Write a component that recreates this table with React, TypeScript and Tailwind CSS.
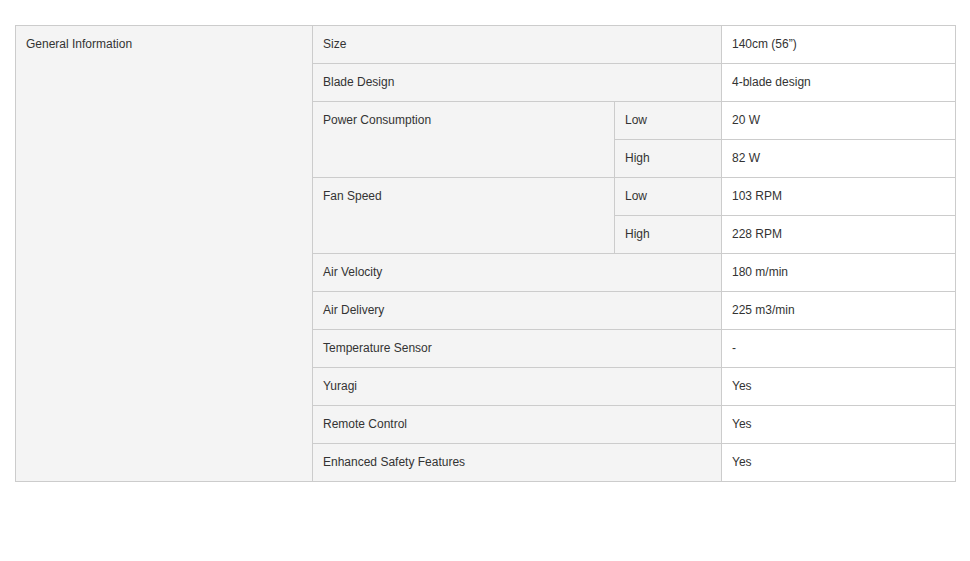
import React from "react";

const td = "border border-[#cccccc] align-top px-[10px] pt-[10px] pb-0 leading-[17px]";
const gray = "bg-[#f4f4f4]";

export default function App() {
  return (
    <div className="w-[970px] h-[561px] bg-white pt-[25px] pl-[15px] text-[12px] text-[#333333]" style={{ fontFamily: '"Liberation Sans", Arial, sans-serif' }}>
      <table className="border-collapse table-fixed w-[940px]">
        <colgroup>
          <col className="w-[297px]" />
          <col className="w-[302px]" />
          <col className="w-[107px]" />
          <col className="w-[234px]" />
        </colgroup>
        <tbody>
          <tr className="h-[38px]">
            <td rowSpan={12} className={`${td} ${gray}`}>General Information</td>
            <td colSpan={2} className={`${td} ${gray}`}>Size</td>
            <td className={td}>140cm (56”)</td>
          </tr>
          <tr className="h-[38px]">
            <td colSpan={2} className={`${td} ${gray}`}>Blade Design</td>
            <td className={td}>4-blade design</td>
          </tr>
          <tr className="h-[38px]">
            <td rowSpan={2} className={`${td} ${gray}`}>Power Consumption</td>
            <td className={`${td} ${gray}`}>Low</td>
            <td className={td}>20 W</td>
          </tr>
          <tr className="h-[38px]">
            <td className={`${td} ${gray}`}>High</td>
            <td className={td}>82 W</td>
          </tr>
          <tr className="h-[38px]">
            <td rowSpan={2} className={`${td} ${gray}`}>Fan Speed</td>
            <td className={`${td} ${gray}`}>Low</td>
            <td className={td}>103 RPM</td>
          </tr>
          <tr className="h-[38px]">
            <td className={`${td} ${gray}`}>High</td>
            <td className={td}>228 RPM</td>
          </tr>
          <tr className="h-[38px]">
            <td colSpan={2} className={`${td} ${gray}`}>Air Velocity</td>
            <td className={td}>180 m/min</td>
          </tr>
          <tr className="h-[38px]">
            <td colSpan={2} className={`${td} ${gray}`}>Air Delivery</td>
            <td className={td}>225 m3/min</td>
          </tr>
          <tr className="h-[38px]">
            <td colSpan={2} className={`${td} ${gray}`}>Temperature Sensor</td>
            <td className={td}>-</td>
          </tr>
          <tr className="h-[38px]">
            <td colSpan={2} className={`${td} ${gray}`}>Yuragi</td>
            <td className={td}>Yes</td>
          </tr>
          <tr className="h-[38px]">
            <td colSpan={2} className={`${td} ${gray}`}>Remote Control</td>
            <td className={td}>Yes</td>
          </tr>
          <tr className="h-[38px]">
            <td colSpan={2} className={`${td} ${gray}`}>Enhanced Safety Features</td>
            <td className={td}>Yes</td>
          </tr>
        </tbody>
      </table>
    </div>
  );
}
